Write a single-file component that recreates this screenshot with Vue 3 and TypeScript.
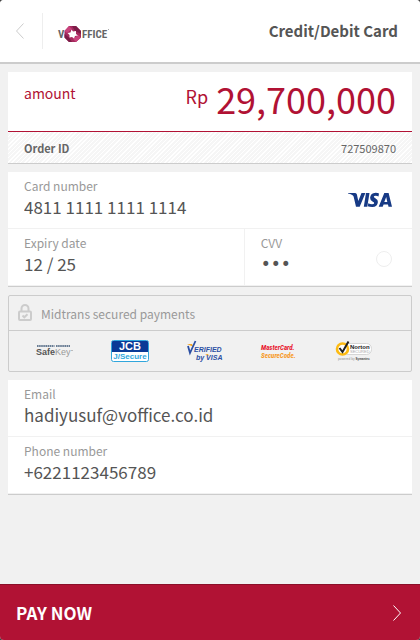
<script setup lang="ts">
import { ref } from 'vue'

const amount = '29,700,000'
const orderId = '727509870'
const cardNumber = ref('4811 1111 1111 1114')
const expiry = ref('12 / 25')
const cvv = ref('123')
const email = ref('hadiyusuf@voffice.co.id')
const phone = ref('+6221123456789')
</script>

<template>
  <form class="page" @submit.prevent>
    <header class="header">
      <button type="button" class="back" aria-label="Back">
        <svg width="10" height="18" viewBox="0 0 10 18"><path d="M8.500 1.500 1.500 9l7 7.500" /></svg>
      </button>
      <svg class="logo" width="52" height="18" viewBox="0 0 52 18" role="img" aria-label="VOFFICE">
        <text class="brand" x="0" y="13">V</text>
        <path fill="#a62a5e" d="M11 1h7l5 5v6.500L18 17h-7l-4.500-4.500V6z" />
        <path fill="#7d1c48" d="M14 1h4l5 5v3L17 6zM14 17h-3l-4.500-4.500V9l4.500 3.500z" />
        <path fill="#c9427c" d="M6.500 6 11 1l3 3-5 4zM23 12.500 18 17l-3-3 5-4z" />
        <path fill="#fff" d="m13.500 4.500 1.500 2 3-.5v3l2 1.500-3 .5-1 2.500-2-1.500-2.500.5V10l-2-2 3-.5z" />
        <text class="brand" x="24" y="13">FFICE</text>
        <path stroke="#aaa" d="M50 4.500h1" />
      </svg>
      <h1 class="title">Credit/Debit Card</h1>
    </header>

    <main class="content">
      <section class="panel">
        <div class="amount">
          <span class="amount-label">amount</span>
          <span class="currency">Rp</span>
          <span class="total">{{ amount }}</span>
        </div>
        <div class="order">
          <strong>Order ID</strong>
          <span>{{ orderId }}</span>
        </div>
      </section>

      <section class="panel">
        <div class="row">
          <label class="field">
            <span class="label">Card number</span>
            <input v-model="cardNumber" type="text" inputmode="numeric" />
          </label>
          <svg class="visa" width="44" height="14" viewBox="0 0 44 14" role="img" aria-label="VISA">
            <path d="M0 0h7.200q1.400 0 1.700 1.600L10.300 8 13.500 0h3.900l-5.700 13.700H8L5.600 3.600Q5.300 2.500 4.200 2 2.300 1 0 .6z" />
            <path d="M18 0h3.500l-2.200 13.700h-3.500z" />
            <path d="m31 .6-.5 2.800q-1.200-.7-2.700-.7-2 0-2 1.100 0 .7 1.900 1.600 2.400 1.200 2.200 3.600Q29.500 14 24.200 14q-2.800 0-4.400-.8l.5-2.900q1.700 1 3.700 1 2.200 0 2.200-1.300 0-.8-1.700-1.600-2.500-1.200-2.400-3.600Q22.500 0 27.700-.2q2 0 3.300.8z" />
            <path fill-rule="evenodd" d="M36.300 0h4.300L44 13.700h-3.500l-.5-2.200h-4.400l-.9 2.200h-4zM38.200 4.100l-1.900 4.900h3z" />
          </svg>
        </div>
        <div class="split">
          <div class="row">
            <label class="field">
              <span class="label">Expiry date</span>
              <input v-model="expiry" type="text" inputmode="numeric" />
            </label>
          </div>
          <div class="row cvv">
            <label class="field">
              <span class="label">CVV</span>
              <input v-model="cvv" class="secret" type="password" maxlength="3" />
            </label>
            <button type="button" class="hint" aria-label="About CVV"></button>
          </div>
        </div>
      </section>

      <section class="secured">
        <div class="secured-head">
          <svg width="16" height="18" viewBox="0 0 16 18">
            <rect x="2" y="7.500" width="12" height="8.500" rx="1" />
            <path d="M4.500 7V4.500a3.500 3.500 0 0 1 7 0V7M5.500 11.500l1.800 1.800 3.200-3" />
          </svg>
          <span>Midtrans secured payments</span>
        </div>
        <div class="badges">
          <svg width="38" height="22" viewBox="0 0 38 22" role="img" aria-label="American Express SafeKey">
            <path stroke="#3d5775" stroke-width="1.500" stroke-dasharray="1.600 .5" d="M1 6h17.500M20 6h14" />
            <text class="safe" x="0" y="15">Safe<tspan class="key">Key</tspan></text>
            <path stroke="#bbb" d="M35 10.500h2" />
          </svg>
          <svg width="38" height="22" viewBox="0 0 38 22" role="img" aria-label="JCB J/Secure">
            <rect x=".5" y=".5" width="37" height="21" rx="2" fill="#fff" stroke="#31a6dc" />
            <path fill="#0a3a96" d="M1 2q0-1 1-1h34q1 0 1 1v10H1z" />
            <text class="jcb" x="19" y="10">JCB</text>
            <text class="jsecure" x="19" y="19">J/Secure</text>
          </svg>
          <svg width="38" height="22" viewBox="0 0 38 22" role="img" aria-label="Verified by VISA">
            <path fill="#f6a623" d="M1 4h5l1.500 3zM19 14h3l1 2z" />
            <path fill="none" stroke="#2c4fa3" stroke-width="1.800" d="m2 6 2 7L9.500 1" />
            <text class="verified" x="8" y="12">ERIFIED</text>
            <text class="verified" x="10" y="20">by VISA</text>
          </svg>
          <svg width="38" height="22" viewBox="0 0 38 22" role="img" aria-label="MasterCard SecureCode">
            <text class="master" x="0" y="10">MasterCard.</text>
            <text class="master code" x="0" y="18">SecureCode.</text>
          </svg>
          <svg width="38" height="22" viewBox="0 0 38 22" role="img" aria-label="Norton Secured, powered by Symantec">
            <rect x="7" y="3.500" width="28.500" height="11" rx="5" fill="#fff" stroke="#d5d5d5" />
            <circle cx="6.500" cy="9" r="5.500" fill="#fff" stroke="#fdbb13" stroke-width="2.600" />
            <path fill="none" stroke="#222" stroke-width="2" d="m3.500 8 3 4 6-10.500" />
            <text class="norton" x="14" y="9">Norton</text>
            <text class="tiny" x="14" y="13">SECURED</text>
            <text class="micro" x="2" y="20">powered by <tspan class="dark">Symantec</tspan></text>
          </svg>
        </div>
      </section>

      <section class="panel">
        <div class="row">
          <label class="field">
            <span class="label">Email</span>
            <input v-model="email" type="email" />
          </label>
        </div>
        <div class="row">
          <label class="field">
            <span class="label">Phone number</span>
            <input v-model="phone" type="tel" />
          </label>
        </div>
      </section>
    </main>

    <button type="submit" class="pay">
      <span>PAY NOW</span>
      <svg width="10" height="18" viewBox="0 0 10 18"><path d="m1.500 1.500 7 7.500-7 7.500" /></svg>
    </button>
  </form>
</template>

<style>
body {
  background: #444;
}
</style>

<style scoped>
.page {
  display: flex;
  flex-direction: column;
  min-height: 100vh;
  overflow: hidden;
  border-radius: 4px;
  background: #f1f1f1;
  color: #555;
  font-family: "Noto Sans CJK SC", "Open Sans", sans-serif;
}

button {
  border: 0;
  background: none;
  font-family: inherit;
  cursor: pointer;
}

.header {
  display: flex;
  align-items: center;
  height: 62px;
  padding-right: 22px;
  border-bottom: 2px solid #ccc;
  background: #fff;
}

.back {
  display: flex;
  align-items: center;
  height: 36px;
  padding: 0 17px 0 15px;
  border-right: 1px solid #eee;
}

.back path {
  fill: none;
  stroke: #ccc;
}

.logo {
  margin: 6px 0 0 15px;
  overflow: visible;
}

.brand {
  fill: #666;
  font: bold 11px "Roboto Condensed", "Liberation Sans", sans-serif;
}

.title {
  margin: 0 0 0 auto;
  font-size: 15px;
  line-height: 20px;
  font-weight: 700;
}

.content {
  display: flex;
  flex: 1;
  flex-direction: column;
  gap: 8px;
  padding: 8px;
}

.panel {
  border-bottom: 1px solid #ccc;
  background: #fff;
}

.amount {
  display: flex;
  padding: 8px 16px;
  border-bottom: 1px solid #b11234;
  color: #b11234;
}

.amount-label {
  flex: 1;
  font-size: 14px;
  line-height: 26px;
}

.currency {
  margin-right: 8px;
  font-size: 18px;
  line-height: 32px;
}

.total {
  height: 43px;
  font-size: 36px;
  line-height: 36px;
}

.order {
  display: flex;
  align-items: center;
  justify-content: space-between;
  height: 31px;
  padding: 0 16px;
  background: repeating-linear-gradient(135deg, #fff 0 1px, #f6f6f6 1px 3px);
  color: #666;
  font-size: 11px;
}

.row {
  display: flex;
  align-items: center;
  padding: 4px 20px 4px 16px;
  border-bottom: 1px solid #f1f1f1;
}

.field {
  display: flex;
  flex: 1;
  flex-direction: column;
  min-width: 0;
}

.label {
  color: #999;
  font-size: 12px;
  line-height: 20px;
}

.field input {
  width: 100%;
  height: 28px;
  box-sizing: border-box;
  padding: 0 0 7px;
  border: 0;
  outline: 0;
  background: none;
  color: #555;
  font-family: inherit;
  font-size: 17px;
  line-height: 21px;
}

.visa {
  flex: none;
  overflow: visible;
  fill: #173a85;
}

.split {
  display: grid;
  grid-template-columns: 7fr 5fr;
}

.cvv {
  border-left: 1px solid #f1f1f1;
}

.field .secret {
  font-family: "DejaVu Sans", sans-serif;
}

.hint {
  flex: none;
  width: 16px;
  height: 16px;
  margin-top: 4px;
  padding: 0;
  border: 1px solid #eee;
  border-radius: 50%;
}

.secured {
  border: 1px solid #ccc;
  border-radius: 2px;
}

.secured-head {
  display: flex;
  align-items: center;
  gap: 8px;
  height: 34px;
  padding: 0 8px;
  border-bottom: 1px solid #ccc;
  color: #999;
  font-size: 12px;
}

.secured-head svg {
  fill: none;
  stroke: #ccc;
  stroke-width: 2;
}

.badges {
  display: flex;
  align-items: center;
  justify-content: space-between;
  height: 40px;
  padding: 0 37px 0 27px;
}

.badges svg {
  overflow: visible;
}

.badges text {
  font-family: "Liberation Sans", sans-serif;
  font-weight: 700;
}

.badges .safe {
  fill: #555;
  font-size: 9px;
}

.badges .key {
  fill: #999;
  font-weight: 400;
}

.badges .jcb {
  fill: #fff;
  font-size: 11px;
  text-anchor: middle;
}

.badges .jsecure {
  fill: #31a6dc;
  font-size: 8px;
  text-anchor: middle;
}

.badges .verified {
  fill: #2c4fa3;
  font-size: 7px;
  font-style: italic;
}

.badges .master {
  fill: #e8142c;
  font-family: "Roboto Condensed", "Liberation Sans", sans-serif;
  font-size: 7px;
  font-style: italic;
}

.badges .code {
  fill: #f7981d;
}

.badges .norton {
  fill: #222;
  font-size: 6px;
}

.badges .tiny {
  fill: #aaa;
  font-size: 4px;
  font-weight: 400;
}

.badges .micro {
  fill: #aaa;
  font-size: 3px;
}

.badges .dark {
  fill: #444;
}

.pay {
  display: flex;
  align-items: center;
  justify-content: space-between;
  height: 56px;
  padding: 0 18px 0 16px;
  border-top: 1px solid #8a0f29;
  background: #b11234;
  color: #fff;
  font-size: 17px;
  font-weight: 700;
}

.pay path {
  fill: none;
  stroke: #fff;
}
</style>
